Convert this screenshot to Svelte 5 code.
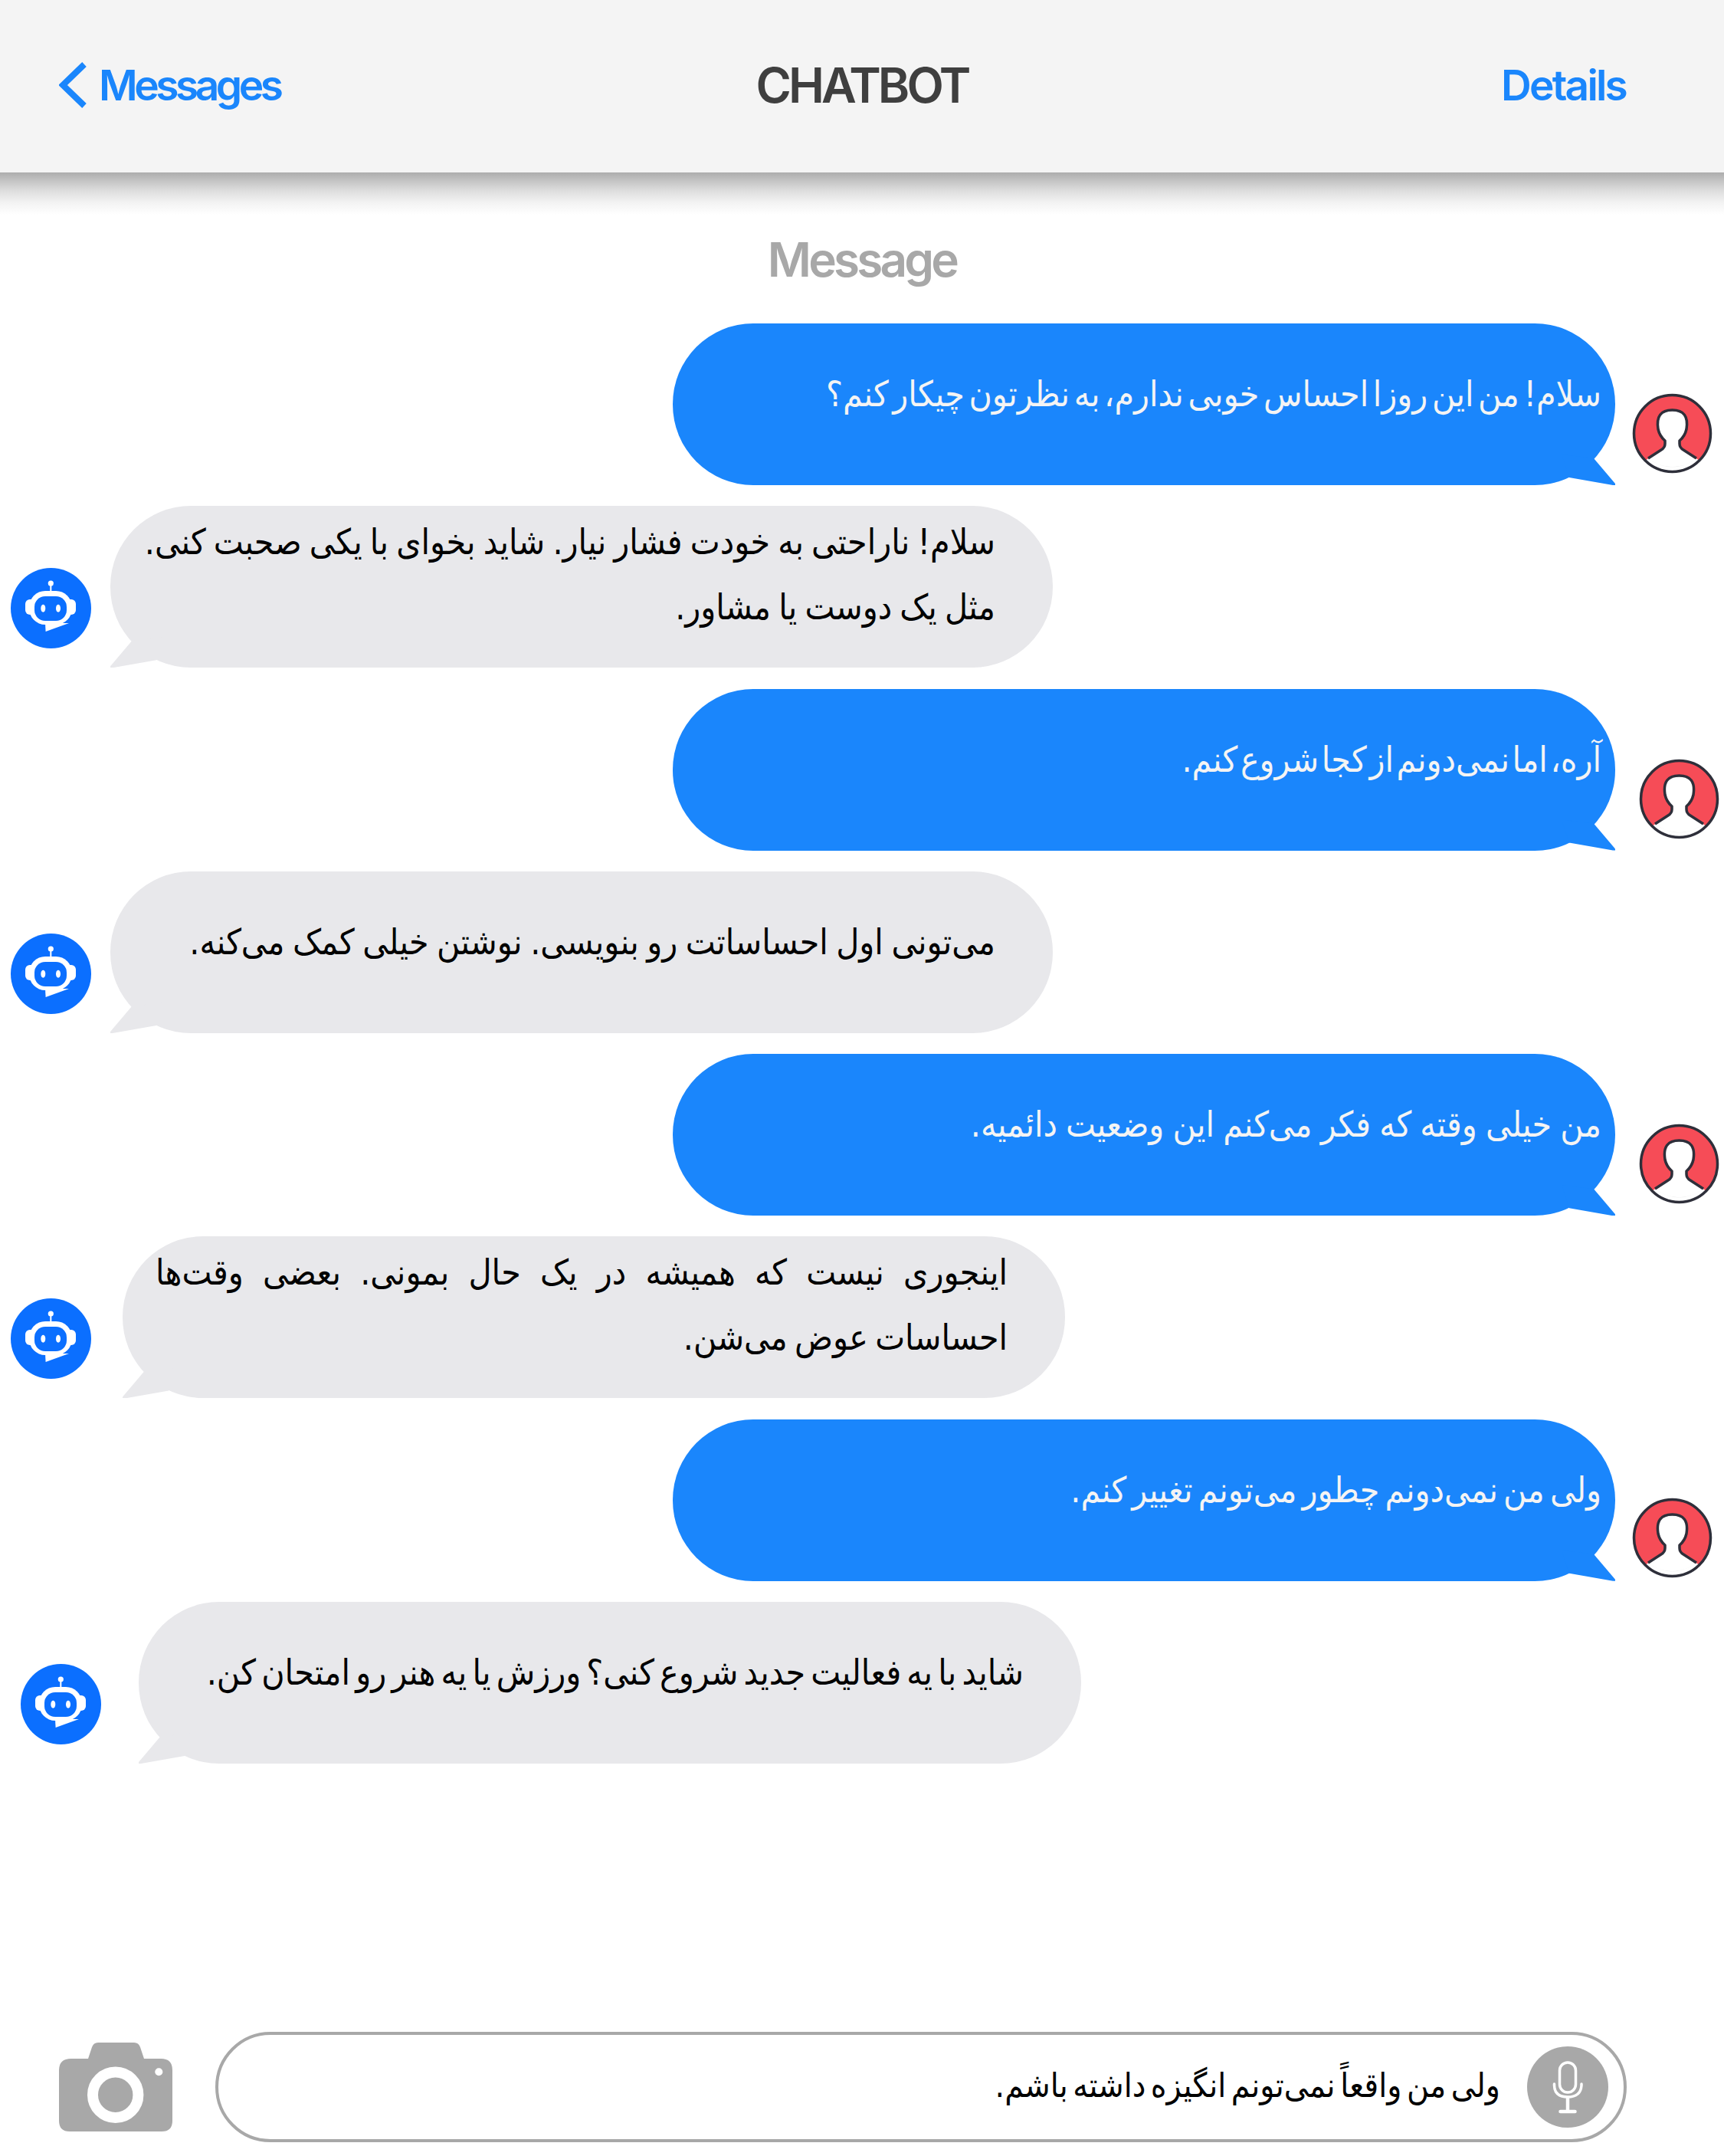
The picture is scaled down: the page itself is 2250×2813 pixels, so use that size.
<script>
	const messages = [
		{ from: 'me', lines: ['سلام! من این روزا احساس خوبی ندارم، به نظرتون چیکار کنم؟'], gap: 22, ws: -7.5 },
		{ from: 'bot', lines: ['سلام! ناراحتی به خودت فشار نیار. شاید بخوای با یکی صحبت کنی.', 'مثل یک دوست یا مشاور.'], left: 14, gap: 25, ws: -3 },
		{ from: 'me', lines: ['آره، اما نمی‌دونم از کجا شروع کنم.'], gap: 31, ws: -9.5 },
		{ from: 'bot', lines: ['می‌تونی اول احساساتت رو بنویسی. نوشتن خیلی کمک می‌کنه.'], left: 14, gap: 25, ws: -2.6 },
		{ from: 'me', lines: ['من خیلی وقته که فکر می‌کنم این وضعیت دائمیه.'], gap: 31, ws: -2 },
		{ from: 'bot', lines: ['اینجوری نیست که همیشه در یک حال بمونی. بعضی وقت‌ها', 'احساسات عوض می‌شن.'], left: 14, gap: 41, justify: true, ws: -4 },
		{ from: 'me', lines: ['ولی من نمی‌دونم چطور می‌تونم تغییر کنم.'], gap: 22, drop: 102, ws: -6 },
		{ from: 'bot', lines: ['شاید با یه فعالیت جدید شروع کنی؟ ورزش یا یه هنر رو امتحان کن.'], left: 27, gap: 49, ws: -6 }
	];
</script>

{#snippet userAvatar(drop)}
	<svg class="avatar" viewBox="0 0 105 105" style={drop ? `margin-top: ${drop}px` : undefined}>
		<circle cx="52.5" cy="52.5" r="50" fill="#f64c57" />
		<path
			d="M17 88 L38 74 Q43 71 43 66 L43 62 Q36 56 34 47 Q30 22 52.5 22 Q75 22 71 47 Q69 56 62 62 L62 66 Q62 71 67 74 L88 88 A50 50 0 0 1 17 88 Z"
			fill="#fff"
		/>
		<path d="M21 85 Q52.5 108 84 85 A50 50 0 0 1 21 85 Z" fill="#ececec" />
		<path
			d="M21 85 L38 74 Q43 71 43 66 L43 62 Q36 56 34 47 Q30 22 52.5 22 Q75 22 71 47 Q69 56 62 62 L62 66 Q62 71 67 74 L84 85"
			fill="none"
			stroke="#2e2f3a"
			stroke-width="3.5"
			stroke-linejoin="round"
		/>
		<circle cx="52.5" cy="52.5" r="50" fill="none" stroke="#2e2f3a" stroke-width="3.5" />
	</svg>
{/snippet}

{#snippet botAvatar()}
	<svg class="avatar" viewBox="0 0 105 105">
		<circle cx="52.5" cy="52.5" r="52.5" fill="#0b6fff" />
		<circle cx="52.3" cy="20" r="3.6" fill="#fff" />
		<path d="M52.3 20 V31" stroke="#fff" stroke-width="2" />
		<rect x="19" y="41" width="66" height="20" rx="6" fill="#fff" />
		<path d="M45 72 L45.6 83 L76 72 Z" fill="#fff" />
		<rect x="24" y="30" width="56" height="44" rx="21" fill="#fff" />
		<rect x="31" y="37" width="42" height="32" rx="14" fill="#0b6fff" />
		<ellipse cx="42.3" cy="52.7" rx="3" ry="5" fill="#fff" />
		<ellipse cx="62" cy="52.7" rx="3" ry="5" fill="#fff" />
	</svg>
{/snippet}

<div class="page">
	<header class="topbar">
		<div class="back">
			<svg class="chevron" viewBox="0 0 36 60">
				<path d="M33 3 L5 30 L33 57" fill="none" stroke="#1a86fc" stroke-width="8" />
			</svg>
			<span>Messages</span>
		</div>
		<div class="title">CHATBOT</div>
		<div class="details">Details</div>
	</header>
	<div class="shade"></div>

	<div class="label">Message</div>

	<main class="thread">
		{#each messages as m, i (i)}
			{#if m.from === 'me'}
				<div class="row me" style="gap: {m.gap}px">
					<div class="bubble blue" style="word-spacing: {m.ws}px">
						<p dir="rtl">{m.lines[0]}</p>
					</div>
					{@render userAvatar(m.drop)}
				</div>
			{:else}
				<div class="row bot" style="padding-left: {m.left}px; gap: {m.gap}px">
					{@render botAvatar()}
					<div class="bubble gray" class:two={m.lines.length > 1} style="word-spacing: {m.ws}px">
						{#each m.lines as line, j (j)}
							<p dir="rtl" class:just={m.justify && j === 0}>{line}</p>
						{/each}
					</div>
				</div>
			{/if}
		{/each}
	</main>

	<footer class="composer">
		<svg class="camera" viewBox="0 0 148 116">
			<path
				d="M16 21 H38 L43 6 Q45 0 51 0 H98 Q104 0 106 6 L111 21 H133 Q148 21 148 36 V102 Q148 116 134 116 H14 Q0 116 0 102 V36 Q0 21 16 21 Z"
				fill="#a8a8a8"
			/>
			<circle cx="73.7" cy="68.3" r="29.7" fill="none" stroke="#fff" stroke-width="14" />
			<circle cx="130.3" cy="38.3" r="5" fill="#fff" />
		</svg>
		<div class="input">
			<span dir="rtl">ولی من واقعاً نمی‌تونم انگیزه داشته باشم.</span>
			<svg class="mic" viewBox="0 0 106 106">
				<circle cx="53" cy="53" r="53" fill="#a8a8a8" />
				<rect x="42.5" y="21" width="21" height="39" rx="10.5" fill="none" stroke="#fff" stroke-width="3.5" />
				<path d="M35.5 49 V51 Q36 66 53 66 Q70 66 71 51 V49" fill="none" stroke="#fff" stroke-width="3.5" stroke-linecap="round" />
				<path d="M53 66 V84" stroke="#fff" stroke-width="4.5" />
				<path d="M43.5 85 H62.5" stroke="#fff" stroke-width="4.5" stroke-linecap="round" />
			</svg>
		</div>
	</footer>
</div>

<style>
	:global(body) {
		margin: 0;
		background: #fff;
	}

	.page {
		display: flex;
		flex-direction: column;
		width: 2250px;
		height: 2813px;
		overflow: hidden;
		font-family: Inter, 'Liberation Sans', sans-serif;
	}

	.topbar {
		display: grid;
		grid-template-columns: 1fr auto 1fr;
		align-items: center;
		height: 225px;
		padding: 0 128px 4px;
		box-sizing: border-box;
		background: #f4f4f4;
	}

	.back {
		display: flex;
		align-items: center;
		gap: 16px;
		margin-left: -51px;
		font-size: 55px;
		font-weight: 600;
		letter-spacing: -4.5px;
		color: #1a86fc;
	}

	.chevron {
		width: 36px;
		height: 60px;
	}

	.title {
		font-size: 63px;
		font-weight: 600;
		letter-spacing: -4px;
		color: #3f3f3f;
	}

	.details {
		justify-self: end;
		font-size: 55px;
		font-weight: 600;
		letter-spacing: -2.8px;
		color: #1a86fc;
	}

	.shade {
		height: 55px;
		background: linear-gradient(#acacac, #c4c4c4 20%, #dcdcdc 42%, #f2f2f2 70%, #fff);
	}

	.label {
		margin-top: 20px;
		text-align: center;
		font-size: 62px;
		line-height: 78px;
		font-weight: 600;
		letter-spacing: -3.8px;
		color: #a8a8a8;
	}

	.thread {
		display: flex;
		flex-direction: column;
		gap: 27.3px;
		margin-top: 44px;
	}

	.row {
		display: flex;
		height: 211px;
	}

	.row.me {
		padding-left: 878px;
	}

	.avatar {
		flex: none;
		width: 105px;
		height: 105px;
	}

	.me .avatar {
		margin-top: 91px;
	}

	.bot .avatar {
		margin-top: 81px;
	}

	.bubble {
		position: relative;
		flex: none;
		box-sizing: border-box;
		width: 1230px;
		height: 211px;
		border-radius: 105px;
		display: flex;
		flex-direction: column;
		justify-content: center;
		font-family: 'DejaVu Sans', sans-serif;
		font-size: 46px;
		font-stretch: condensed;
	}

	.bubble p {
		margin: 0;
		line-height: 85px;
		white-space: nowrap;
	}

	.bubble::after {
		content: '';
		position: absolute;
		bottom: 0;
		width: 70px;
		height: 40px;
		background: inherit;
	}

	.blue {
		background: #1a86fc;
		color: #f4f4f4;
		padding: 0 18px 26px 0;
	}

	.blue::after {
		right: 0;
		clip-path: polygon(0 0, 42px 5px, 70px 38px, 70px 40px, 67px 40px, 10px 30px);
	}

	.gray {
		background: #e8e8eb;
		color: #000;
		padding: 0 75px 26px 0;
	}

	.gray.two {
		padding-bottom: 32px;
	}

	.gray::after {
		left: 0;
		clip-path: polygon(70px 0, 28px 5px, 0 38px, 0 40px, 3px 40px, 60px 30px);
	}

	.just {
		text-align: justify;
		text-align-last: justify;
		margin-left: 43px !important;
		white-space: normal !important;
	}

	.composer {
		display: flex;
		align-items: center;
		gap: 56px;
		margin-top: auto;
		margin-bottom: 18px;
		padding-left: 77px;
	}

	.camera {
		flex: none;
		width: 148px;
		height: 116px;
	}

	.input {
		flex: none;
		box-sizing: border-box;
		display: flex;
		align-items: center;
		justify-content: flex-end;
		gap: 35px;
		width: 1842px;
		height: 144px;
		padding-right: 20px;
		border: 4px solid #a8a8a8;
		border-radius: 72px;
		font-family: 'DejaVu Sans', sans-serif;
		font-size: 44px;
		font-stretch: condensed;
		word-spacing: -6px;
		color: #000;
	}

	.input span {
		margin-bottom: 6px;
	}

	.mic {
		flex: none;
		width: 106px;
		height: 106px;
	}
</style>
